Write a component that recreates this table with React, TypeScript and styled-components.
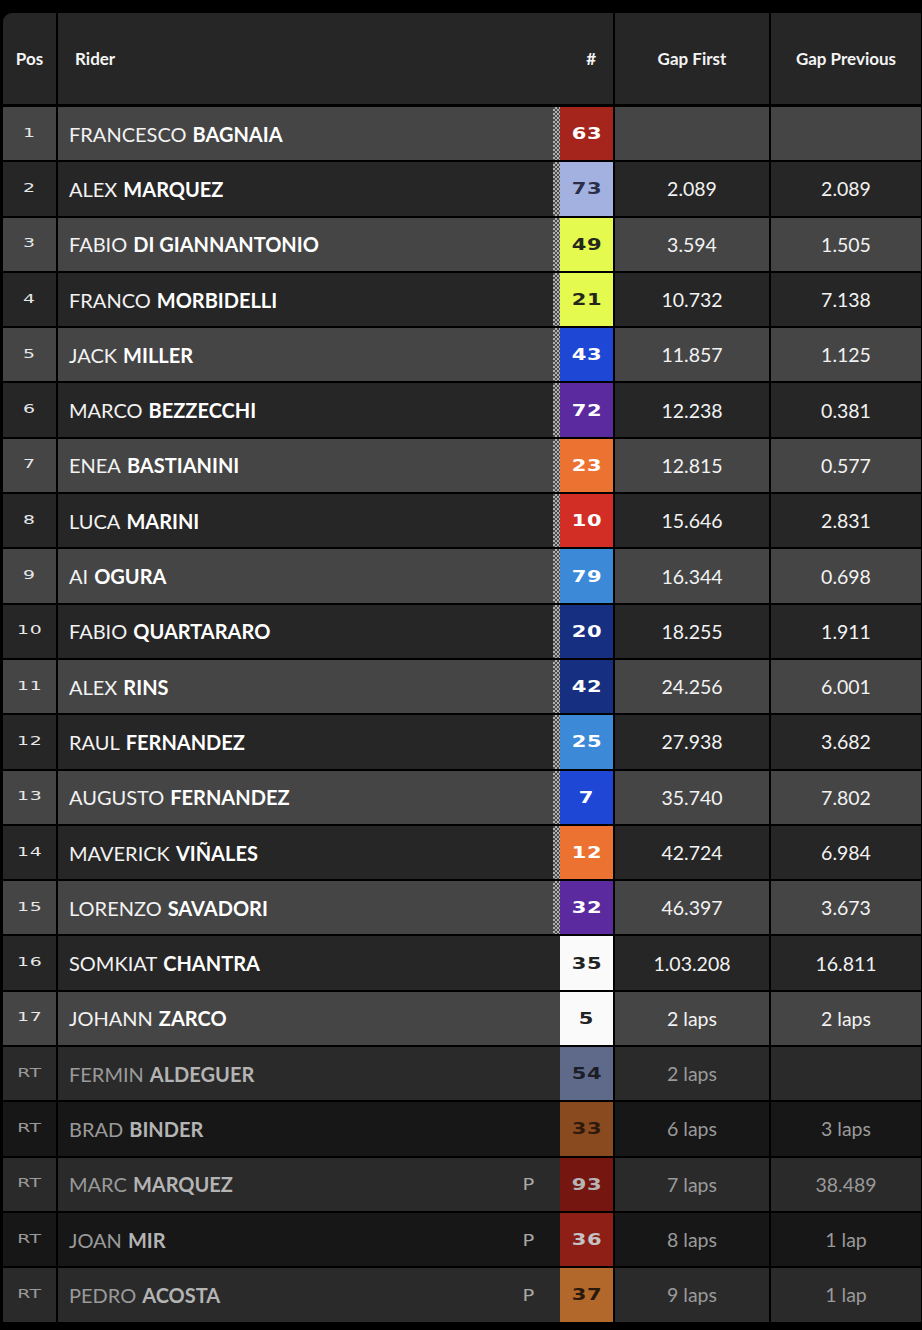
import React from "react";
import styled, { createGlobalStyle, css } from "styled-components";

const GlobalStyle = createGlobalStyle`
  html, body { margin: 0; padding: 0; background: #000; }
  body {
    font-family: "Lato", "Noto Sans", sans-serif;
    color: #f2f2f2;
  }
  #root { padding: 13px 1px 8px 3px; }
`;

type Rider = {
  pos: string;
  first: string;
  last: string;
  num: string;
  badge: string;
  ink: string;
  gapFirst: string;
  gapPrev: string;
  checker?: boolean;
  retired?: boolean;
  penalty?: boolean;
};

const riders: Rider[] = [
  { pos: "1", first: "FRANCESCO", last: "BAGNAIA", num: "63", badge: "#a5241c", ink: "#fff", gapFirst: "", gapPrev: "", checker: true },
  { pos: "2", first: "ALEX", last: "MARQUEZ", num: "73", badge: "#a3b1e1", ink: "#2a2e48", gapFirst: "2.089", gapPrev: "2.089", checker: true },
  { pos: "3", first: "FABIO", last: "DI GIANNANTONIO", num: "49", badge: "#e4fa4f", ink: "#25271c", gapFirst: "3.594", gapPrev: "1.505", checker: true },
  { pos: "4", first: "FRANCO", last: "MORBIDELLI", num: "21", badge: "#e4fa4f", ink: "#25271c", gapFirst: "10.732", gapPrev: "7.138", checker: true },
  { pos: "5", first: "JACK", last: "MILLER", num: "43", badge: "#1e47d6", ink: "#fff", gapFirst: "11.857", gapPrev: "1.125", checker: true },
  { pos: "6", first: "MARCO", last: "BEZZECCHI", num: "72", badge: "#5b2a9f", ink: "#fff", gapFirst: "12.238", gapPrev: "0.381", checker: true },
  { pos: "7", first: "ENEA", last: "BASTIANINI", num: "23", badge: "#ec7232", ink: "#fff", gapFirst: "12.815", gapPrev: "0.577", checker: true },
  { pos: "8", first: "LUCA", last: "MARINI", num: "10", badge: "#d22e25", ink: "#fff", gapFirst: "15.646", gapPrev: "2.831", checker: true },
  { pos: "9", first: "AI", last: "OGURA", num: "79", badge: "#3b89d7", ink: "#fff", gapFirst: "16.344", gapPrev: "0.698", checker: true },
  { pos: "10", first: "FABIO", last: "QUARTARARO", num: "20", badge: "#172f80", ink: "#fff", gapFirst: "18.255", gapPrev: "1.911", checker: true },
  { pos: "11", first: "ALEX", last: "RINS", num: "42", badge: "#172f80", ink: "#fff", gapFirst: "24.256", gapPrev: "6.001", checker: true },
  { pos: "12", first: "RAUL", last: "FERNANDEZ", num: "25", badge: "#3b89d7", ink: "#fff", gapFirst: "27.938", gapPrev: "3.682", checker: true },
  { pos: "13", first: "AUGUSTO", last: "FERNANDEZ", num: "7", badge: "#1e47d6", ink: "#fff", gapFirst: "35.740", gapPrev: "7.802", checker: true },
  { pos: "14", first: "MAVERICK", last: "VIÑALES", num: "12", badge: "#ec7232", ink: "#fff", gapFirst: "42.724", gapPrev: "6.984", checker: true },
  { pos: "15", first: "LORENZO", last: "SAVADORI", num: "32", badge: "#5b2a9f", ink: "#fff", gapFirst: "46.397", gapPrev: "3.673", checker: true },
  { pos: "16", first: "SOMKIAT", last: "CHANTRA", num: "35", badge: "#fafafa", ink: "#222", gapFirst: "1.03.208", gapPrev: "16.811" },
  { pos: "17", first: "JOHANN", last: "ZARCO", num: "5", badge: "#fafafa", ink: "#222", gapFirst: "2 laps", gapPrev: "2 laps" },
  { pos: "RT", first: "FERMIN", last: "ALDEGUER", num: "54", badge: "#5f6a8b", ink: "#1c1e26", gapFirst: "2 laps", gapPrev: "", retired: true },
  { pos: "RT", first: "BRAD", last: "BINDER", num: "33", badge: "#8a4a1f", ink: "#2e1a0c", gapFirst: "6 laps", gapPrev: "3 laps", retired: true },
  { pos: "RT", first: "MARC", last: "MARQUEZ", num: "93", badge: "#761611", ink: "#b5b5b5", gapFirst: "7 laps", gapPrev: "38.489", retired: true, penalty: true },
  { pos: "RT", first: "JOAN", last: "MIR", num: "36", badge: "#8d1f17", ink: "#c4c4c4", gapFirst: "8 laps", gapPrev: "1 lap", retired: true, penalty: true },
  { pos: "RT", first: "PEDRO", last: "ACOSTA", num: "37", badge: "#b2672b", ink: "#2a180b", gapFirst: "9 laps", gapPrev: "1 lap", retired: true, penalty: true },
];

const Table = styled.div`
  display: flex;
  flex-direction: column;
  gap: 3px;
  background: #000;
`;

const Body = styled.div`
  display: flex;
  flex-direction: column;
  gap: 2px;
`;

const gridCols = css`
  display: grid;
  grid-template-columns: 53px 1fr 154px 150px;
  column-gap: 2px;
`;

const HeaderRow = styled.div`
  ${gridCols};
  height: 91px;
`;

const HeadCell = styled.div`
  background: #262626;
  display: flex;
  align-items: center;
  justify-content: center;
  font-family: "Lato", "Noto Sans", sans-serif;
  font-weight: 700;
  font-size: 17px;
  color: #f4f4f4;
  &:first-child { border-top-left-radius: 9px; }
`;

const RiderHead = styled(HeadCell)`
  justify-content: space-between;
  padding: 0 17px;
`;

const bgFor = (odd: boolean, retired: boolean) =>
  retired ? (odd ? "#171717" : "#2a2a2a") : odd ? "#454545" : "#262626";

const Row = styled.div<{ $shade: string; $retired?: boolean }>`
  ${gridCols};
  height: 53.3px;
  & > * { background: ${(p) => p.$shade}; }
  color: ${(p) => (p.$retired ? "#9a9a9a" : "#f2f2f2")};
`;

const Display = css`
  font-family: "DejaVu Sans", sans-serif;
  display: inline-block;
  letter-spacing: 0.5px;
`;

const PosCell = styled.div`
  display: flex;
  align-items: center;
  justify-content: center;
`;

const PosText = styled.span<{ $retired?: boolean }>`
  ${Display};
  font-size: 13px;
  font-weight: 400;
  transform: scaleX(1.45);
  margin-top: -3px;
  color: ${(p) => (p.$retired ? "#9a9a9a" : "#e8e8e8")};
`;

const RiderCell = styled.div`
  display: flex;
  align-items: stretch;
`;

const Name = styled.div`
  flex: 1;
  display: flex;
  align-items: center;
  padding-left: 11px;
  font-size: 20px;
  font-weight: 400;
  white-space: nowrap;
`;

const Last = styled.b<{ $retired?: boolean }>`
  font-weight: 700;
  margin-left: 6px;
  color: ${(p) => (p.$retired ? "#b4b4b4" : "#ffffff")};
`;

const Penalty = styled.div`
  display: flex;
  align-items: center;
  justify-content: center;
  width: 30px;
  margin-right: 16px;
  color: #a8a8a8;
`;

const PenaltyGlyph = styled.span`
  ${Display};
  font-size: 15px;
  font-weight: 400;
  transform: scaleX(1.3);
  margin-top: 2px;
`;

const Checker = styled.div`
  width: 7px;
  background-image: repeating-conic-gradient(#b0b0b0 0% 25%, #4a4a4a 0% 50%);
  background-size: 4px 4px;
`;

const Badge = styled.div<{ $bg: string; $ink: string }>`
  width: 53px;
  flex: none;
  display: flex;
  align-items: center;
  justify-content: center;
  background: ${(p) => p.$bg};
  color: ${(p) => p.$ink};
`;

const BadgeNum = styled.span`
  ${Display};
  font-size: 15px;
  font-weight: 700;
  transform: scaleX(1.4);
  margin-top: 1px;
`;

const GapCell = styled.div`
  display: flex;
  align-items: center;
  justify-content: center;
  font-size: 19.5px;
  font-weight: 400;
`;

export default function App() {
  return (
    <>
      <GlobalStyle />
      <Table>
        <HeaderRow>
          <HeadCell>Pos</HeadCell>
          <RiderHead>
            <span>Rider</span>
            <span>#</span>
          </RiderHead>
          <HeadCell>Gap First</HeadCell>
          <HeadCell>Gap Previous</HeadCell>
        </HeaderRow>
        <Body>
          {riders.map((r, i) => {
            const odd = i % 2 === 0;
            return (
              <Row key={i} $shade={bgFor(odd, !!r.retired)} $retired={r.retired}>
                <PosCell>
                  <PosText $retired={r.retired}>{r.pos}</PosText>
                </PosCell>
                <RiderCell>
                  <Name>
                    {r.first}
                    <Last $retired={r.retired}>{r.last}</Last>
                  </Name>
                  {r.penalty && (
                    <Penalty>
                      <PenaltyGlyph>P</PenaltyGlyph>
                    </Penalty>
                  )}
                  {r.checker && <Checker />}
                  <Badge $bg={r.badge} $ink={r.ink}>
                    <BadgeNum>{r.num}</BadgeNum>
                  </Badge>
                </RiderCell>
                <GapCell>{r.gapFirst}</GapCell>
                <GapCell>{r.gapPrev}</GapCell>
              </Row>
            );
          })}
        </Body>
      </Table>
    </>
  );
}
